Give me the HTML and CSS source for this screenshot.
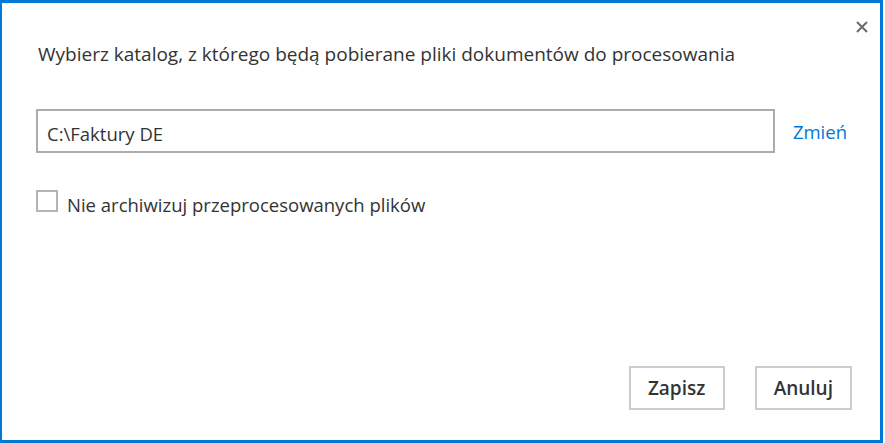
FILE: index.html
```html
<!DOCTYPE html>
<html lang="pl">
<head>
    <meta charset="UTF-8">
    <title>Katalog dokumentów</title>
    <link rel="stylesheet" href="styles.css">
</head>
<body>
    <div class="dialog">
        <button class="close" type="button" aria-label="Zamknij">
            <svg width="12" height="12" viewBox="0 0 12 12">
                <path d="M1 1 L11 11 M11 1 L1 11" stroke="#6b6b6b" stroke-width="2" fill="none"/>
            </svg>
        </button>

        <p class="title">Wybierz katalog, z którego będą pobierane pliki dokumentów do procesowania</p>

        <div class="path-row">
            <div class="path-box">C:\Faktury DE</div>
            <a class="change" href="#">Zmień</a>
        </div>

        <label class="check">
            <span class="box"></span>
            Nie archiwizuj przeprocesowanych plików
        </label>

        <div class="actions">
            <button type="button" class="btn">Zapisz</button>
            <button type="button" class="btn">Anuluj</button>
        </div>
    </div>
</body>
</html>
```

FILE: styles.css
```css
body {
    margin: 0;
    font-family: "Open Sans", "Noto Sans", sans-serif;
    color: #333;
    background: #fff;
}
.dialog {
    position: relative;
    box-sizing: border-box;
    width: 883px;
    height: 443px;
    border: 2px solid #0078d7;
    border-top-width: 3px;
    border-bottom-width: 3px;
    border-right-width: 3px;
    padding: 39px 28px 30px 34px;
    display: flex;
    flex-direction: column;
}
.close {
    position: absolute;
    top: 18px;
    right: 12px;
    width: 12px;
    height: 12px;
    padding: 0;
    border: none;
    background: none;
    cursor: pointer;
    display: flex;
}
.title {
    margin: 0;
    font-size: 19px;
    line-height: 24px;
    padding-left: 2px;
}
.path-row {
    display: flex;
    align-items: center;
    margin-top: 43px;
    padding-right: 5px;
}
.path-box {
    flex: 1;
    box-sizing: border-box;
    height: 44px;
    border: 2px solid #acacac;
    padding: 11px 9px 0;
    font-size: 18.5px;
    line-height: 24px;
}
.change {
    margin-left: 18px;
    color: #0078d7;
    text-decoration: none;
    font-size: 18.5px;
}
.check {
    display: flex;
    align-items: baseline;
    gap: 9px;
    margin-top: 37px;
    font-size: 18.5px;
    line-height: 26px;
}
.box {
    box-sizing: border-box;
    width: 22px;
    height: 22px;
    border: 2px solid #b4b4b4;
}
.actions {
    margin-top: auto;
    display: flex;
    justify-content: flex-end;
    gap: 30px;
}
.btn {
    box-sizing: border-box;
    height: 44px;
    min-width: 96px;
    padding: 0 17px;
    border: 2px solid #cccccc;
    background: #fff;
    color: #333;
    font-family: inherit;
    font-size: 19px;
    font-weight: 600;
    cursor: pointer;
}
```
